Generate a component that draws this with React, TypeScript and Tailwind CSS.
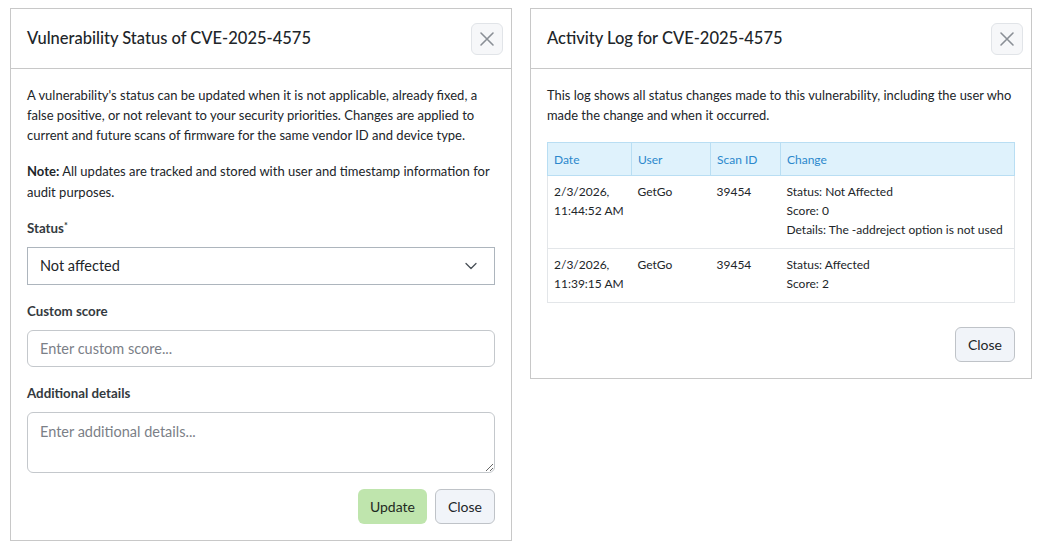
import React from 'react';

const font = { fontFamily: 'Lato, "Noto Sans", sans-serif' };

const XIcon = () => (
  <svg width="16" height="16" viewBox="0 0 16 16" fill="none" stroke="#8a8f96" strokeWidth="1.6" strokeLinecap="round">
    <path d="M2 2L14 14M14 2L2 14" />
  </svg>
);

const Chevron = () => (
  <svg width="14" height="14" viewBox="0 0 14 14" fill="none" stroke="#495057" strokeWidth="1.3" strokeLinecap="round" strokeLinejoin="round">
    <path d="M2 4.5L7 9.5L12 4.5" />
  </svg>
);

function Header({ title }: { title: string }) {
  return (
    <div className="flex h-[60px] items-center justify-between border-b border-[#c8c8c8] pl-4 pr-2">
      <h2 className="text-[16.5px] font-medium text-[#212529]">{title}</h2>
      <button className="flex h-8 w-8 items-center justify-center rounded-md border border-[#e1e4e8] bg-[#f6f7f9]">
        <XIcon />
      </button>
    </div>
  );
}

function StatusDialog() {
  return (
    <div className="w-[502px] border border-[#c8c8c8] bg-white">
      <Header title="Vulnerability Status of CVE-2025-4575" />
      <div className="p-4 text-[13px] leading-[20px] text-[#212529]">
        <p>
          A vulnerability's status can be updated when it is not applicable, already fixed, a false positive, or not
          relevant to your security priorities. Changes are applied to current and future scans of firmware for the same
          vendor ID and device type.
        </p>
        <p className="mt-4 leading-[20.5px]">
          <span className="font-bold">Note:</span> All updates are tracked and stored with user and timestamp
          information for audit purposes.
        </p>

        <label className="mt-4 block text-[13.3px] font-bold text-[#343a40]">
          Status<sup className="text-[9px]">*</sup>
        </label>
        <div className="mt-[9px] flex h-[38px] items-center justify-between border border-[#adb5bd] pl-3 pr-4 text-[14.5px]">
          <span>Not affected</span>
          <Chevron />
        </div>

        <label className="mt-4 block text-[13.3px] font-bold text-[#343a40]">Custom score</label>
        <div className="mt-[9px] flex h-[37px] items-center rounded-md border border-[#c4c8cc] px-3 text-[14.5px] text-[#7b8087]">
          Enter custom score...
        </div>

        <label className="mt-4 block text-[13.3px] font-bold text-[#343a40]">Additional details</label>
        <textarea
          className="mt-[9px] block h-[61px] w-full resize-y rounded-md border border-[#c4c8cc] px-3 pb-1 pt-[8px] text-[14.5px] leading-[22px] placeholder:text-[#7b8087]"
          placeholder="Enter additional details..."
          style={font}
        />

        <div className="mt-4 flex justify-end gap-2">
          <button className="h-[35px] rounded-md bg-[#bfe5ad] px-3 text-[14px] text-[#1f2a1f]">Update</button>
          <button className="h-[35px] rounded-md border border-[#bfc3c8] bg-[#f1f4f9] px-3 text-[14px] text-[#212529]">
            Close
          </button>
        </div>
      </div>
    </div>
  );
}

const rows = [
  {
    date: ['2/3/2026,', '11:44:52 AM'],
    user: 'GetGo',
    scan: '39454',
    change: ['Status: Not Affected', 'Score: 0', 'Details: The -addreject option is not used'],
  },
  {
    date: ['2/3/2026,', '11:39:15 AM'],
    user: 'GetGo',
    scan: '39454',
    change: ['Status: Affected', 'Score: 2'],
  },
];

function ActivityLog() {
  return (
    <div className="w-[502px] border border-[#c8c8c8] bg-white">
      <Header title="Activity Log for CVE-2025-4575" />
      <div className="p-4 text-[12.9px] leading-[20px] text-[#212529]">
        <p>
          This log shows all status changes made to this vulnerability, including the user who made the change and when
          it occurred.
        </p>
        <table className="mt-[17px] w-full border-collapse text-[12px] leading-[19px]">
          <thead>
            <tr className="h-[33px] bg-[#dff2fc] text-left text-[#2b88cc]">
              <th className="w-[84px] border border-[#b9def3] px-[6px] font-normal">Date</th>
              <th className="w-[79px] border border-[#b9def3] px-[6px] font-normal">User</th>
              <th className="w-[70px] border border-[#b9def3] px-[6px] font-normal">Scan ID</th>
              <th className="border border-[#b9def3] px-[6px] font-normal">Change</th>
            </tr>
          </thead>
          <tbody>
            {rows.map((r, i) => (
              <tr key={i} className="border border-[#e3e6e9] align-top">
                <td className="px-[6px] pb-[9px] pt-[6px]">
                  {r.date.map((d) => (
                    <div key={d}>{d}</div>
                  ))}
                </td>
                <td className="px-[6px] pt-[6px]">{r.user}</td>
                <td className="px-[6px] pt-[6px]">{r.scan}</td>
                <td className="px-[6px] pb-[9px] pt-[6px]">
                  {r.change.map((c) => (
                    <div key={c}>{c}</div>
                  ))}
                </td>
              </tr>
            ))}
          </tbody>
        </table>
        <div className="mt-[24px] flex justify-end">
          <button className="h-[35px] rounded-md border border-[#bfc3c8] bg-[#f1f4f9] px-3 text-[14px] text-[#212529]">
            Close
          </button>
        </div>
      </div>
    </div>
  );
}

export default function App() {
  return (
    <div className="flex min-h-[550px] items-start gap-[18px] bg-white pl-[10px] pt-2" style={font}>
      <StatusDialog />
      <ActivityLog />
    </div>
  );
}
